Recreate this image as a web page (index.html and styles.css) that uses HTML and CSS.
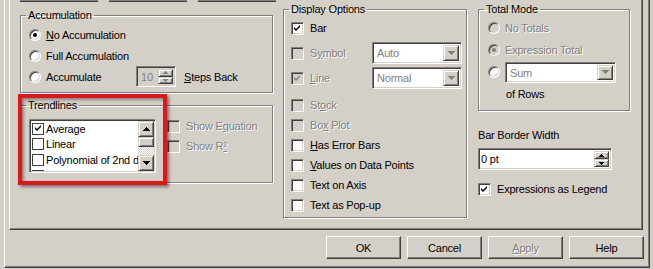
FILE: index.html
```html
<!DOCTYPE html>
<html lang="en">
<head>
    <meta charset="UTF-8">
    <title>Chart Properties</title>
    <link rel="stylesheet" href="styles.css">
</head>
<body>
<div class="window">
    <div class="page">
        <div class="stubs">
            <span class="stub"></span>
            <span class="stub"></span>
            <span class="stub"></span>
        </div>

        <div class="columns">
            <!-- left column -->
            <div class="col col-left">
                <fieldset class="group group-accum">
                    <legend>Accumulation</legend>
                    <div class="group-body accum-body">
                        <div class="row">
                            <span class="radio"><span class="dot"></span></span>
                            <span class="label"><u>N</u>o Accumulation</span>
                        </div>
                        <div class="row">
                            <span class="radio"></span>
                            <span class="label">Full Accumulation</span>
                        </div>
                        <div class="row">
                            <span class="radio"></span>
                            <span class="label label-accum">Accumulate</span>
                            <div class="spin spin-steps disabled">
                                <span class="spin-text">10</span>
                                <span class="spin-btns">
                                    <span class="btn3d"><svg width="5" height="3" viewBox="0 0 5 3"><path d="M0 3h5v-1h-1v-1h-1v-1h-1v1h-1v1h-1z" fill="#808080"/></svg></span>
                                    <span class="btn3d"><svg width="5" height="3" viewBox="0 0 5 3"><path d="M0 0h5v1h-1v1h-1v1h-1v-1h-1v-1h-1z" fill="#808080"/></svg></span>
                                </span>
                            </div>
                            <span class="label steps-label"><u>S</u>teps Back</span>
                        </div>
                    </div>
                </fieldset>

                <fieldset class="group group-trend">
                    <legend>Trendlines</legend>
                    <div class="group-body trend-body">
                        <div class="listbox">
                            <div class="list-items">
                                <div class="item">
                                    <span class="lcheck"><svg width="9" height="9" viewBox="0 0 9 9"><path d="M1 3l2 2 4-4v2l-4 4-2-2z" fill="#000"/></svg></span>
                                    Average
                                </div>
                                <div class="item"><span class="lcheck"></span>Linear</div>
                                <div class="item"><span class="lcheck"></span>Polynomial of 2nd degree</div>
                                <div class="item"><span class="lcheck"></span>Polynomial of 3rd degree</div>
                            </div>
                            <div class="scrollbar">
                                <span class="btn3d sb-btn"><svg width="7" height="4" viewBox="0 0 7 4"><path d="M0 4h7v-1h-1v-1h-1v-1h-1v-1h-1v1h-1v1h-1v1h-1z" fill="#000"/></svg></span>
                                <span class="btn3d sb-thumb"></span>
                                <span class="sb-track"></span>
                                <span class="btn3d sb-btn"><svg width="7" height="4" viewBox="0 0 7 4"><path d="M0 0h7v1h-1v1h-1v1h-1v1h-1v-1h-1v-1h-1v-1h-1z" fill="#000"/></svg></span>
                            </div>
                        </div>
                        <div class="trend-options">
                            <div class="row row-tight">
                                <span class="check disabled"></span>
                                <span class="label dis">Show E<u>q</u>uation</span>
                            </div>
                            <div class="row row-tight">
                                <span class="check disabled"></span>
                                <span class="label dis">Show R<u>²</u></span>
                            </div>
                        </div>
                    </div>
                </fieldset>
            </div>

            <!-- middle column -->
            <div class="col col-mid">
                <fieldset class="group group-display">
                    <legend>Display Options</legend>
                    <div class="group-body display-body">
                        <div class="row row-20">
                            <span class="check"><svg width="13" height="13" viewBox="0 0 13 13"><path d="M3 5l2 2 4-4v2l-4 4-2-2z" fill="#000"/></svg></span>
                            <span class="label">Bar</span>
                        </div>
                        <div class="row row-combo">
                            <span class="check disabled"></span>
                            <span class="label dis label-opt">S<u>y</u>mbol</span>
                            <div class="combo disabled">
                                <span class="combo-text">Auto</span>
                                <span class="btn3d combo-btn"><svg width="7" height="4" viewBox="0 0 7 4"><path d="M0 0h7v1h-1v1h-1v1h-1v1h-1v-1h-1v-1h-1v-1h-1z" fill="#808080"/></svg></span>
                            </div>
                        </div>
                        <div class="row row-combo row-line">
                            <span class="check disabled"><svg width="13" height="13" viewBox="0 0 13 13"><path d="M3 5l2 2 4-4v2l-4 4-2-2z" fill="#808080"/></svg></span>
                            <span class="label dis label-opt"><u>L</u>ine</span>
                            <div class="combo disabled">
                                <span class="combo-text">Normal</span>
                                <span class="btn3d combo-btn"><svg width="7" height="4" viewBox="0 0 7 4"><path d="M0 0h7v1h-1v1h-1v1h-1v1h-1v-1h-1v-1h-1v-1h-1z" fill="#808080"/></svg></span>
                            </div>
                        </div>
                        <div class="row row-20 row-stock">
                            <span class="check disabled"></span>
                            <span class="label dis">St<u>o</u>ck</span>
                        </div>
                        <div class="row row-20">
                            <span class="check disabled"></span>
                            <span class="label dis">Bo<u>x</u> Plot</span>
                        </div>
                        <div class="row row-20">
                            <span class="check"></span>
                            <span class="label"><u>H</u>as Error Bars</span>
                        </div>
                        <div class="row row-20">
                            <span class="check"></span>
                            <span class="label"><u>V</u>alues on Data Points</span>
                        </div>
                        <div class="row row-20">
                            <span class="check"></span>
                            <span class="label">Text on Axis</span>
                        </div>
                        <div class="row row-20">
                            <span class="check"></span>
                            <span class="label">Text as Pop-up</span>
                        </div>
                    </div>
                </fieldset>
            </div>

            <!-- right column -->
            <div class="col col-right">
                <fieldset class="group group-total">
                    <legend>Total Mode</legend>
                    <div class="group-body total-body">
                        <div class="row row-22">
                            <span class="radio disabled"></span>
                            <span class="label dis">No Totals</span>
                        </div>
                        <div class="row row-22">
                            <span class="radio disabled"><span class="dot"></span></span>
                            <span class="label dis">Expression Total</span>
                        </div>
                        <div class="row row-22">
                            <span class="radio"></span>
                            <div class="combo combo-sum disabled">
                                <span class="combo-text">Sum</span>
                                <span class="btn3d combo-btn"><svg width="7" height="4" viewBox="0 0 7 4"><path d="M0 0h7v1h-1v1h-1v1h-1v1h-1v-1h-1v-1h-1v-1h-1z" fill="#808080"/></svg></span>
                            </div>
                        </div>
                        <div class="row row-22 rows-label">
                            <span class="label">of Rows</span>
                        </div>
                    </div>
                </fieldset>

                <div class="field-label">Bar Border Width</div>
                <div class="spin spin-width">
                    <span class="spin-text">0 pt</span>
                    <span class="spin-btns">
                        <span class="btn3d"><svg width="5" height="3" viewBox="0 0 5 3"><path d="M0 3h5v-1h-1v-1h-1v-1h-1v1h-1v1h-1z" fill="#000"/></svg></span>
                        <span class="btn3d"><svg width="5" height="3" viewBox="0 0 5 3"><path d="M0 0h5v1h-1v1h-1v1h-1v-1h-1v-1h-1z" fill="#000"/></svg></span>
                    </span>
                </div>
                <div class="row legend-row">
                    <span class="check"><svg width="13" height="13" viewBox="0 0 13 13"><path d="M3 5l2 2 4-4v2l-4 4-2-2z" fill="#000"/></svg></span>
                    <span class="label">Expressions as Legend</span>
                </div>
            </div>
        </div>
    </div>

    <div class="buttons">
        <button class="btn">OK</button>
        <button class="btn">Cancel</button>
        <button class="btn dis"><u>A</u>pply</button>
        <button class="btn">Help</button>
    </div>

    <!-- red highlight drawn over the screenshot -->
    <div class="highlight"></div>
</div>
</body>
</html>
```

FILE: styles.css
```css
/* Reset */
* {
    box-sizing: border-box;
}

body {
    margin: 0;
    padding-left: 4px;
    background: #d4d0c8;
    font-family: "Liberation Sans", Arial, sans-serif;
    font-size: 11px;
    letter-spacing: -0.2px;
    color: #000;
    overflow: hidden;
}

u {
    text-decoration-thickness: 1px;
    text-underline-offset: 1px;
}

/* Window frame */
.window {
    position: relative;
    width: 646px;
    height: 268px;
    border-left: 1px solid #fff;
    border-right: 1px solid #404040;
    border-bottom: 1px solid #404040;
    box-shadow: inset -1px -1px 0 #808080;
}

/* Tab page */
.page {
    margin-left: 4px;
    width: 634px;
    height: 230px;
    border-left: 1px solid #fff;
    border-right: 1px solid #404040;
    border-bottom: 1px solid #404040;
    box-shadow: inset -1px -1px 0 #808080;
}

.stubs {
    display: flex;
    gap: 11px;
    height: 2px;
    padding-left: 10px;
}

.stub {
    width: 78px;
    height: 2px;
    background: #404040;
    border-top: 1px solid #808080;
}

.columns {
    display: flex;
    padding-left: 10px;
}

.col {
    display: flex;
    flex-direction: column;
}

.col-left {
    width: 253px;
    margin-top: 7px;
}

.col-mid {
    width: 184px;
    margin-left: 10px;
    margin-top: 1px;
}

.col-right {
    width: 152px;
    margin-left: 11px;
    margin-top: 1px;
}

/* Group boxes */
.group {
    margin: 0;
    padding: 0;
    min-width: 0;
    border: 1px solid #808080;
    box-shadow: 1px 1px 0 #fff, inset 1px 1px 0 #fff;
}

.group legend {
    margin-left: 5px;
    padding: 0 2px;
    line-height: 13px;
}

.group-accum {
    height: 84px;
}

.accum-body {
    padding: 2px 0 0 8px;
}

.group-trend {
    height: 84px;
    margin-top: 6px;
}

.trend-body {
    display: flex;
    padding: 7px 0 0 8px;
}

.group-display {
    height: 215px;
}

.display-body {
    padding: 2px 0 0 7px;
}

.group-total {
    height: 108px;
}

.total-body {
    padding: 1px 0 0 9px;
}

/* Rows */
.row {
    display: flex;
    align-items: center;
    height: 21px;
}

.row-20 {
    height: 20px;
}

.row-22 {
    height: 22px;
}

.row-tight {
    height: 20px;
}

.row-combo {
    height: 22px;
    margin-top: 4px;
}

.row-line {
    margin-top: 3px;
}

.row-stock {
    margin-top: 6px;
}

.label {
    margin-left: 5px;
    white-space: nowrap;
}

.check + .label {
    margin-left: 6px;
}

.label-accum {
    width: 90px;
}

.label-opt {
    width: 62px;
}

.steps-label {
    margin-left: 8px;
}

.rows-label .label {
    margin-left: 18px;
}

.dis {
    color: #808080;
    text-shadow: 1px 1px 0 #fff;
}

/* Radio buttons */
.radio {
    display: flex;
    align-items: center;
    justify-content: center;
    flex: none;
    width: 12px;
    height: 12px;
    border-radius: 50%;
    background: #fff;
    border: 1px solid;
    border-color: #808080 #fff #fff #808080;
    box-shadow: inset 1px 1px 0 #404040, inset -1px -1px 0 #d4d0c8;
}

.radio.disabled {
    background: #d4d0c8;
}

.dot {
    width: 4px;
    height: 4px;
    border-radius: 50%;
    background: #000;
}

.radio.disabled .dot {
    background: #808080;
}

/* Check boxes */
.check {
    display: flex;
    flex: none;
    width: 13px;
    height: 13px;
    background: #fff;
    border: 1px solid;
    border-color: #808080 #fff #fff #808080;
    box-shadow: inset 1px 1px 0 #404040, inset -1px -1px 0 #d4d0c8;
}

.check svg {
    margin: -1px;
}

.check.disabled {
    background: #d4d0c8;
}

/* Raised buttons */
.btn3d {
    display: flex;
    align-items: center;
    justify-content: center;
    background: #d4d0c8;
    border: 1px solid;
    border-color: #d4d0c8 #404040 #404040 #d4d0c8;
    box-shadow: inset 1px 1px 0 #fff, inset -1px -1px 0 #808080;
}

/* Combo boxes */
.combo {
    display: flex;
    width: 90px;
    height: 22px;
    padding: 2px;
    background: #fff;
    border: 1px solid;
    border-color: #808080 #fff #fff #808080;
    box-shadow: inset 1px 1px 0 #404040, inset -1px -1px 0 #d4d0c8;
}

.combo-text {
    flex: 1;
    padding-left: 2px;
    line-height: 16px;
}

.combo.disabled .combo-text {
    color: #808080;
}

.combo-btn {
    width: 16px;
}

.combo-sum {
    width: 111px;
    height: 21px;
    margin-left: 5px;
}

/* Spin edits */
.spin {
    display: flex;
    padding: 2px;
    background: #fff;
    border: 1px solid;
    border-color: #808080 #fff #fff #808080;
    box-shadow: inset 1px 1px 0 #404040, inset -1px -1px 0 #d4d0c8;
}

.spin.disabled {
    background: #d4d0c8;
}

.spin-text {
    flex: 1;
    line-height: 17px;
}

.spin.disabled .spin-text {
    color: #808080;
    padding-left: 2px;
}

.spin-btns {
    display: flex;
    flex-direction: column;
    width: 15px;
}

.spin-btns .btn3d {
    flex: 1;
}

.spin-steps {
    width: 40px;
    height: 21px;
}

.spin-width {
    width: 134px;
    height: 22px;
    margin-top: 6px;
}

.field-label {
    margin-top: 18px;
    line-height: 13px;
}

.legend-row {
    height: 14px;
    margin-top: 12px;
}

/* Trendline list */
.listbox {
    display: flex;
    width: 127px;
    height: 54px;
    padding: 1px;
    background: #fff;
    border: 1px solid;
    border-color: #808080 #fff #fff #808080;
    box-shadow: inset 1px 1px 0 #404040, inset -1px -1px 0 #d4d0c8;
    overflow: hidden;
}

.list-items {
    flex: 1;
    overflow: hidden;
}

.item {
    display: flex;
    align-items: center;
    gap: 2px;
    height: 16px;
    white-space: nowrap;
}

.item:first-child {
    height: 15px;
}

.lcheck {
    display: flex;
    align-items: center;
    justify-content: center;
    flex: none;
    width: 12px;
    height: 12px;
    margin-left: 1px;
    border: 1px solid #404040;
    background: #fff;
}

.scrollbar {
    display: flex;
    flex-direction: column;
    width: 16px;
    flex: none;
    background: #fff;
}

.sb-btn {
    height: 16px;
}

.sb-thumb {
    height: 10px;
}

.sb-track {
    height: 8px;
    background: repeating-conic-gradient(#d4d0c8 0 25%, #fff 0 50%) 0 0 / 2px 2px;
}

.trend-options {
    margin-left: 11px;
    margin-top: -3px;
}

/* Dialog buttons */
.buttons {
    display: flex;
    justify-content: flex-end;
    gap: 6px;
    margin-top: 6px;
    padding-right: 5px;
}

.btn {
    width: 75px;
    height: 23px;
    padding: 0;
    font: inherit;
    letter-spacing: inherit;
    color: #000;
    background: #d4d0c8;
    border: 1px solid;
    border-color: #fff #404040 #404040 #fff;
    box-shadow: inset -1px -1px 0 #808080;
}

.btn.dis {
    color: #808080;
}

/* Annotation */
.highlight {
    position: absolute;
    left: 13px;
    top: 94px;
    width: 149px;
    height: 91px;
    border: 4px solid #e0161b;
    box-shadow: 2px 2px 3px rgba(0, 0, 0, 0.45), inset 2px 2px 3px rgba(0, 0, 0, 0.35);
}
```
